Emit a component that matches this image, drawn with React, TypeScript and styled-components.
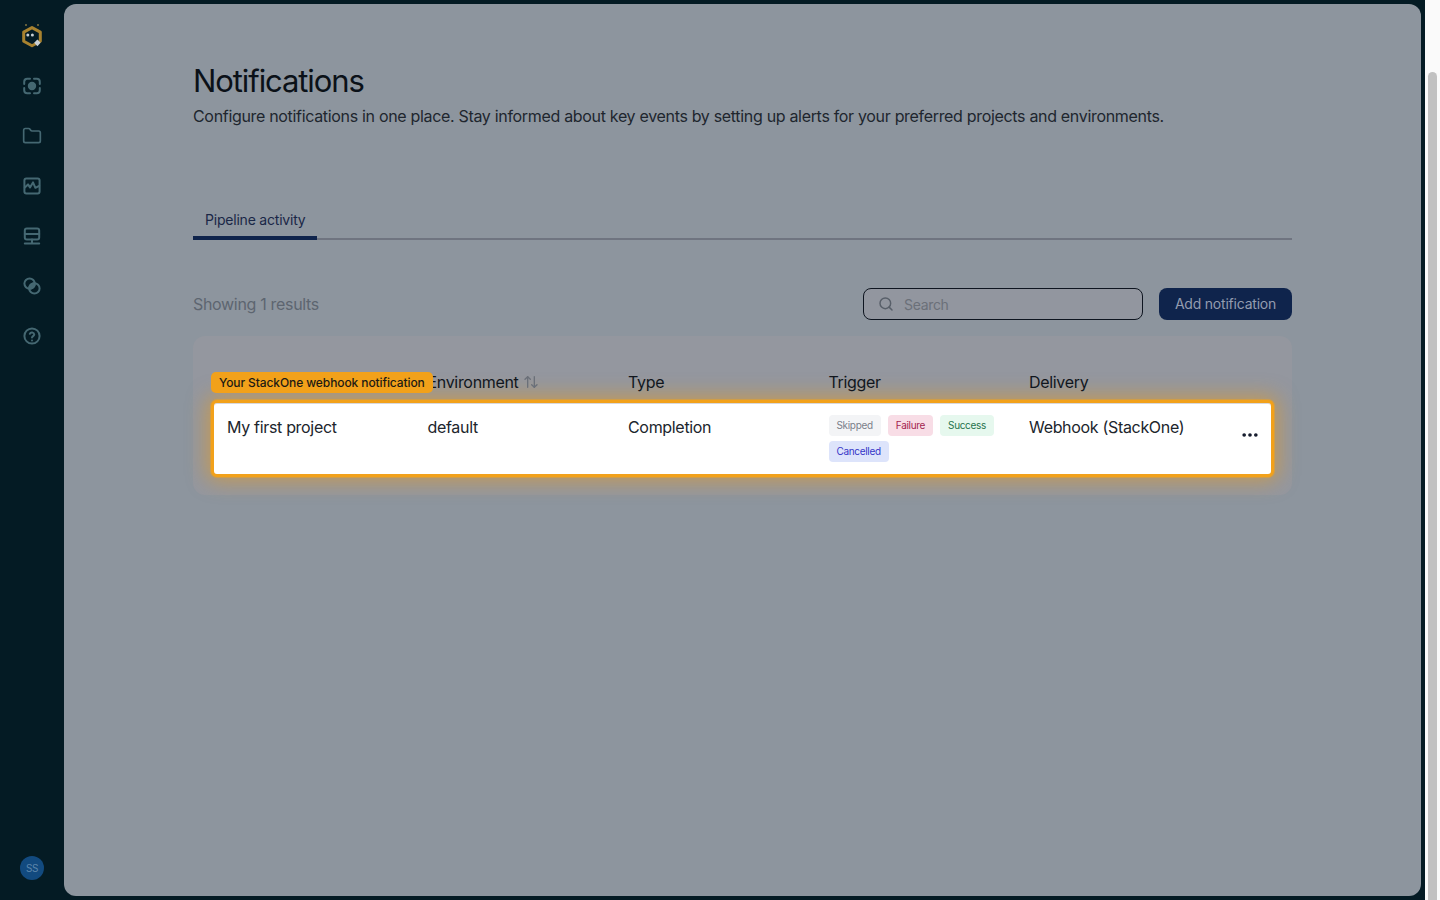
import { ReactNode } from 'react'
import styled, { createGlobalStyle } from 'styled-components'
import { ArrowUpDown, Folder, MoreHorizontal, Search } from 'lucide-react'

const GlobalStyle = createGlobalStyle`
  html, body {
    margin: 0;
    height: 100%;
    overflow: hidden;
    background: #041b24;
    font-family: Inter, 'Liberation Sans', sans-serif;
    letter-spacing: -0.02em;
  }
`

const NavSvg = ({ children }: { children: ReactNode }) => (
  <svg
    width='20'
    height='20'
    viewBox='0 0 20 20'
    fill='none'
    stroke='currentColor'
    strokeWidth='2'
    strokeLinecap='round'
    strokeLinejoin='round'
  >
    {children}
  </svg>
)

const Logo = () => (
  <svg width='24' height='26' viewBox='0 0 24 26' fill='none'>
    <circle cx='6' cy='2' r='1' fill='#7f7342' />
    <circle cx='18' cy='2' r='1' fill='#7f7342' />
    <path d='M12 4.6 20.3 9.1V18.3L12 22.8 3.7 18.3V9.1Z' stroke='#a8822f' strokeWidth='3' strokeLinejoin='round' />
    <circle cx='7.8' cy='12' r='1.5' fill='#c9d0d4' />
    <circle cx='12.4' cy='12' r='1.5' fill='#c9d0d4' />
    <path d='M17.4 16.4 20.6 19.8 17.4 23.2 14.2 19.8Z' fill='#c9d0d4' />
  </svg>
)

const ScanIcon = () => (
  <NavSvg>
    <path d='M8 2.8H5.2a3 3 0 0 0-3 3V8M12 2.8h2.8a3 3 0 0 1 3 3V8M8 17.2H5.2a3 3 0 0 1-3-3V12M12 17.2h2.8a3 3 0 0 0 3-3V12' />
    <circle cx='10' cy='10' r='3.2' fill='currentColor' />
  </NavSvg>
)

const ChartIcon = () => (
  <NavSvg>
    <rect x='2.4' y='2.4' width='15.2' height='15.2' rx='2' />
    <path d='M2.8 11.4 6 8.4l2 3 3-5 2.4 5.4 3.8-2' />
  </NavSvg>
)

const ServerIcon = () => (
  <NavSvg>
    <rect x='2.8' y='2.6' width='14.4' height='11' rx='2' />
    <path d='M2.8 8h14.4M10 13.6v3.8M2.8 17.4h14.4' />
  </NavSvg>
)

const CirclesIcon = () => (
  <NavSvg>
    <circle cx='7.6' cy='7.6' r='5.2' />
    <circle cx='12.4' cy='12.4' r='5.2' />
    <path d='M12.79 7.21A5.2 5.2 0 0 1 7.21 12.79 5.2 5.2 0 0 1 12.79 7.21Z' fill='currentColor' />
  </NavSvg>
)

const HelpIcon = () => (
  <NavSvg>
    <circle cx='10' cy='10' r='7.6' />
    <path d='M7.8 7.8a2.3 2.3 0 0 1 4.4.6c0 1.5-2.2 1.9-2.2 3.2' />
    <path d='M10 14.4h.01' />
  </NavSvg>
)

const triggers = [
  { label: 'Skipped', bg: '#f3f4f6', fg: '#7b808a' },
  { label: 'Failure', bg: '#f8dde6', fg: '#a3234f' },
  { label: 'Success', bg: '#e6f8ee', fg: '#25734c' },
  { label: 'Cancelled', bg: '#dde4fb', fg: '#3535c8' }
]

export default function App() {
  return (
    <>
      <GlobalStyle />
      <Page>
        <Sidebar>
          <LogoSlot>
            <Logo />
          </LogoSlot>
          <NavItem>
            <ScanIcon />
          </NavItem>
          <NavItem>
            <Folder size={20} strokeWidth={2} />
          </NavItem>
          <NavItem>
            <ChartIcon />
          </NavItem>
          <NavItem>
            <ServerIcon />
          </NavItem>
          <NavItem>
            <CirclesIcon />
          </NavItem>
          <NavItem>
            <HelpIcon />
          </NavItem>
          <Avatar>SS</Avatar>
        </Sidebar>
        <Main>
          <Title>Notifications</Title>
          <Subtitle>
            Configure notifications in one place. Stay informed about key events by setting up alerts for your preferred
            projects and environments.
          </Subtitle>
          <Tabs>
            <Tab>Pipeline activity</Tab>
          </Tabs>
          <Toolbar>
            <Results>Showing 1 results</Results>
            <SearchBox>
              <SearchGlyph>
                <Search size={16} strokeWidth={2.2} />
              </SearchGlyph>
              <span>Search</span>
            </SearchBox>
            <AddButton>Add notification</AddButton>
          </Toolbar>
          <Card>
            <HeaderRow>
              <Tooltip>Your StackOne webhook notification</Tooltip>
              <HeaderCell />
              <HeaderCell>
                Environment <ArrowUpDown size={16} color='#6b7079' />
              </HeaderCell>
              <HeaderCell>Type</HeaderCell>
              <HeaderCell>Trigger</HeaderCell>
              <HeaderCell>Delivery</HeaderCell>
            </HeaderRow>
            <Row>
              <Cell>My first project</Cell>
              <Cell>default</Cell>
              <Cell>Completion</Cell>
              <Badges>
                {triggers.map((t) => (
                  <Badge key={t.label} $bg={t.bg} $fg={t.fg}>
                    {t.label}
                  </Badge>
                ))}
              </Badges>
              <Cell>Webhook (StackOne)</Cell>
              <Actions>
                <MoreHorizontal size={20} strokeWidth={2.4} />
              </Actions>
            </Row>
          </Card>
        </Main>
        <Scrollbar>
          <Thumb />
        </Scrollbar>
      </Page>
    </>
  )
}

const Page = styled.div`
  display: flex;
  height: 900px;
  width: 1440px;
`

const Sidebar = styled.nav`
  width: 64px;
  flex-shrink: 0;
  display: flex;
  flex-direction: column;
  align-items: center;
  padding-top: 23px;
  box-sizing: border-box;
  color: #456872;
`

const LogoSlot = styled.div`
  height: 26px;
  margin-bottom: 27px;
  display: flex;
`

const NavItem = styled.div`
  width: 20px;
  height: 20px;
  margin-bottom: 30px;
  display: flex;
`

const Avatar = styled.div`
  margin-top: auto;
  margin-bottom: 20px;
  width: 24px;
  height: 24px;
  border-radius: 50%;
  background: #124a7f;
  color: #5d86ab;
  font-size: 10px;
  display: flex;
  align-items: center;
  justify-content: center;
`

const Main = styled.main`
  width: 1357px;
  height: 892px;
  margin-top: 4px;
  flex-shrink: 0;
  border-radius: 12px;
  background: #8d959e;
  box-sizing: border-box;
  padding: 57px 129px 0;
`

const Title = styled.h1`
  margin: 0;
  font-size: 31px;
  line-height: 40px;
  font-weight: 400;
  letter-spacing: -0.035em;
  color: #0b1118;
`

const Subtitle = styled.p`
  margin: 3px 0 0;
  font-size: 16px;
  line-height: 24px;
  color: #20262e;
`

const Tabs = styled.div`
  margin-top: 72px;
  height: 40px;
  box-sizing: border-box;
  display: flex;
  border-bottom: 2px solid #6f7480;
`

const Tab = styled.div`
  height: 40px;
  box-sizing: border-box;
  padding: 10px 12px 0;
  font-size: 14px;
  line-height: 20px;
  letter-spacing: -0.015em;
  color: #1a2747;
  border-bottom: 4px solid #0f244c;
  border-radius: 4px 4px 0 0;
`

const Toolbar = styled.div`
  margin-top: 48px;
  display: flex;
  align-items: center;
`

const Results = styled.div`
  flex: 1;
  font-size: 16px;
  color: #5d6570;
`

const SearchBox = styled.div`
  width: 280px;
  height: 32px;
  box-sizing: border-box;
  border: 1px solid #0e1520;
  border-radius: 8px;
  background: #92969f;
  display: flex;
  align-items: center;
  gap: 10px;
  padding: 0 14px;
  font-size: 14px;
  color: #6b7079;
`

const SearchGlyph = styled.span`
  display: flex;
  color: #585f69;
`

const AddButton = styled.button`
  margin-left: 16px;
  width: 133px;
  height: 32px;
  border: 0;
  border-radius: 8px;
  background: #0f244c;
  color: #939cb0;
  font-family: inherit;
  font-size: 14px;
  letter-spacing: -0.015em;
  padding: 0 0 2px;
`

const Card = styled.section`
  margin-top: 16px;
  height: 159px;
  box-sizing: border-box;
  border-radius: 12px;
  background: #94979f;
  padding: 32px 18px 0;
`

const HeaderRow = styled.div`
  position: relative;
  display: grid;
  grid-template-columns: repeat(5, 200.5px);
  padding-left: 16px;
  height: 32px;
`

const Tooltip = styled.div`
  position: absolute;
  left: 0;
  top: 4px;
  height: 21px;
  padding: 0 8px;
  border-radius: 5px;
  background: #f2a11a;
  color: #1c1a14;
  font-size: 12px;
  font-weight: 500;
  line-height: 21px;
  letter-spacing: -0.1px;
  z-index: 1;
`

const HeaderCell = styled.div`
  display: flex;
  align-items: center;
  gap: 4px;
  height: 28px;
  font-size: 16px;
  color: #11161d;
`

const Row = styled.div`
  display: grid;
  grid-template-columns: repeat(5, 200.5px) 1fr;
  height: 77px;
  box-sizing: border-box;
  border: 3px solid #f2a11a;
  border-radius: 6px;
  background: #fff;
  padding: 12px 0 0 13px;
  box-shadow:
    0 0 0 1px rgba(242, 161, 26, 0.45),
    0 0 20px 4px rgba(245, 158, 11, 0.5),
    inset 0 1px 0 #d8d8dc;
`

const Cell = styled.div`
  font-size: 16px;
  line-height: 24px;
  color: #20252c;
`

const Badges = styled.div`
  display: flex;
  flex-wrap: wrap;
  align-content: flex-start;
  gap: 5px 7px;
  width: 172px;
`

const Badge = styled.span<{ $bg: string; $fg: string }>`
  height: 21px;
  padding: 0 8px;
  border-radius: 4px;
  background: ${({ $bg }) => $bg};
  color: ${({ $fg }) => $fg};
  font-size: 10px;
  line-height: 21px;
`

const Actions = styled.div`
  display: flex;
  justify-content: flex-end;
  padding: 10px 11px 0 0;
  color: #12182a;
`

const Scrollbar = styled.div`
  margin-left: 4px;
  width: 15px;
  flex-shrink: 0;
  background: #fafafa;
  padding: 72px 3px 0;
  box-sizing: border-box;
`

const Thumb = styled.div`
  height: 828px;
  border-radius: 5px 5px 0 0;
  background: #c1c1c1;
`
